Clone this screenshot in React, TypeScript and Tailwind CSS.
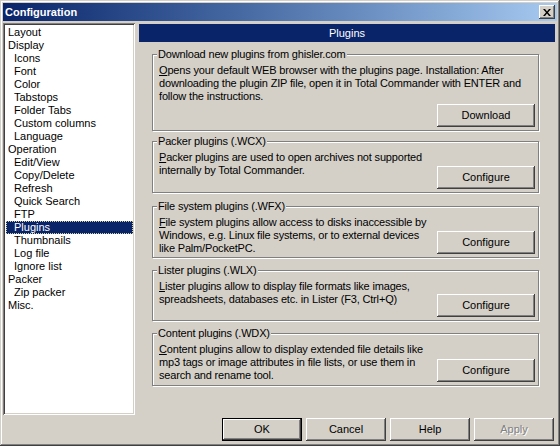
import React from "react";

const raised =
  "bg-[#d4d0c8] shadow-[inset_-1px_-1px_#404040,inset_1px_1px_#ffffff,inset_-2px_-2px_#808080,inset_2px_2px_#d4d0c8]";

const treeItems: [string, number][] = [
  ["Layout", 0],
  ["Display", 0],
  ["Icons", 1],
  ["Font", 1],
  ["Color", 1],
  ["Tabstops", 1],
  ["Folder Tabs", 1],
  ["Custom columns", 1],
  ["Language", 1],
  ["Operation", 0],
  ["Edit/View", 1],
  ["Copy/Delete", 1],
  ["Refresh", 1],
  ["Quick Search", 1],
  ["FTP", 1],
  ["Plugins", 1],
  ["Thumbnails", 1],
  ["Log file", 1],
  ["Ignore list", 1],
  ["Packer", 0],
  ["Zip packer", 1],
  ["Misc.", 0],
];

const Button = ({ label, className = "" }: { label: string; className?: string }) => (
  <div className={`${raised} flex h-[23px] w-[98px] items-center justify-center tracking-normal ${className}`}>
    {label}
  </div>
);

const Group = ({
  title,
  className = "",
  children,
}: {
  title: string;
  className?: string;
  children: React.ReactNode;
}) => (
  <div
    className={`relative ml-[13px] w-[387px] border border-[#808080] tracking-[-0.17px] shadow-[inset_1px_1px_#ffffff,1px_1px_#ffffff] ${className}`}
  >
    <span className="absolute left-[4px] top-[-7px] bg-[#d4d0c8] px-[1px] leading-[13px]">{title}</span>
    {children}
  </div>
);

const PluginGroup = ({
  title,
  mt,
  h,
  children,
}: {
  title: string;
  mt: string;
  h: string;
  children: React.ReactNode;
}) => (
  <Group title={title} className={`flex ${mt} ${h}`}>
    <div className="whitespace-nowrap pl-[6px] pt-[9px] leading-[13px]">{children}</div>
    <Button label="Configure" className="mb-[3px] ml-auto mr-[3px] self-end" />
  </Group>
);

export default function App() {
  return (
    <div className="h-[446px] w-[560px] bg-[#d4d0c8] p-[3px] font-['Liberation_Sans',Arial,sans-serif] text-[11px] leading-[13px] text-black shadow-[inset_-1px_-1px_#404040,inset_1px_1px_#d4d0c8,inset_-2px_-2px_#808080,inset_2px_2px_#ffffff]">
      {/* title bar */}
      <div className="flex h-[18px] items-center bg-gradient-to-r from-[#0a246a] to-[#a6caf0] pl-[2px] pr-[2px]">
        <span className="text-[11px] font-bold text-white">Configuration</span>
        <div className={`${raised} ml-auto flex h-[14px] w-[16px] items-center justify-center`}>
          <svg width="8" height="7" viewBox="0 0 8 7">
            <path d="M0 0h2l2 2.5L6 0h2L5 3.5 8 7H6L4 4.5 2 7H0l3-3.5z" fill="#000" />
          </svg>
        </div>
      </div>

      <div className="mt-[2px] flex h-[392px]">
        {/* tree */}
        <div className="h-[392px] w-[132px] bg-white p-[2px] pt-[3px] shadow-[inset_1px_1px_#808080,inset_-1px_-1px_#ffffff,inset_2px_2px_#404040,inset_-2px_-2px_#d4d0c8]">
          {treeItems.map(([name, level]) => {
            const sel = name === "Plugins";
            return (
              <div
                key={name}
                className={`ml-[1px] h-[13px] whitespace-nowrap leading-[13px] ${level ? "pl-[8px]" : "pl-[2px]"} ${
                  sel ? "bg-[#0a246a] text-white outline-1 -outline-offset-1 outline-dotted outline-[#d8d4a0]" : ""
                }`}
              >
                {name}
              </div>
            );
          })}
        </div>

        {/* right panel */}
        <div className="ml-[4px] mt-[1px] w-[416px]">
          <div className="flex h-[18px] items-center justify-center bg-[#0a246a] text-white">Plugins</div>

          <Group title="Download new plugins from ghisler.com" className="mt-[12px] flex h-[77px] flex-col">
            <div className="whitespace-nowrap pl-[6px] pt-[9px] leading-[13px]">
              <u>O</u>pens your default WEB browser with the plugins page. Installation: After
              <br />
              downloading the plugin ZIP file, open it in Total Commander with ENTER and
              <br />
              follow the instructions.
            </div>
            <Button label="Download" className="mb-[3px] mr-[3px] mt-auto self-end" />
          </Group>

          <PluginGroup title="Packer plugins (.WCX)" mt="mt-[10px]" h="h-[52px]">
            <u>P</u>acker plugins are used to open archives not supported
            <br />
            internally by Total Commander.
          </PluginGroup>

          <PluginGroup title="File system plugins (.WFX)" mt="mt-[13px]" h="h-[52px]">
            <u>F</u>ile system plugins allow access to disks inaccessible by
            <br />
            Windows, e.g. Linux file systems, or to external devices
            <br />
            like Palm/PocketPC.
          </PluginGroup>

          <PluginGroup title="Lister plugins (.WLX)" mt="mt-[12px]" h="h-[51px]">
            <u>L</u>ister plugins allow to display file formats like images,
            <br />
            spreadsheets, databases etc. in Lister (F3, Ctrl+Q)
          </PluginGroup>

          <PluginGroup title="Content plugins (.WDX)" mt="mt-[12px]" h="h-[53px]">
            <u>C</u>ontent plugins allow to display extended file details like
            <br />
            mp3 tags or image attributes in file lists, or use them in
            <br />
            search and rename tool.
          </PluginGroup>
        </div>
      </div>

      {/* bottom buttons */}
      <div className="mt-[3px] flex justify-end gap-[4px] pr-[3px]">
        <div className="border border-black">
          <div className={`${raised} flex h-[21px] w-[78px] items-center justify-center`}>OK</div>
        </div>
        <div className={`${raised} flex h-[23px] w-[80px] items-center justify-center`}>Cancel</div>
        <div className={`${raised} flex h-[23px] w-[80px] items-center justify-center`}>Help</div>
        <div
          className={`${raised} flex h-[23px] w-[80px] items-center justify-center text-[#808080] [text-shadow:1px_1px_#ffffff]`}
        >
          Apply
        </div>
      </div>
    </div>
  );
}
